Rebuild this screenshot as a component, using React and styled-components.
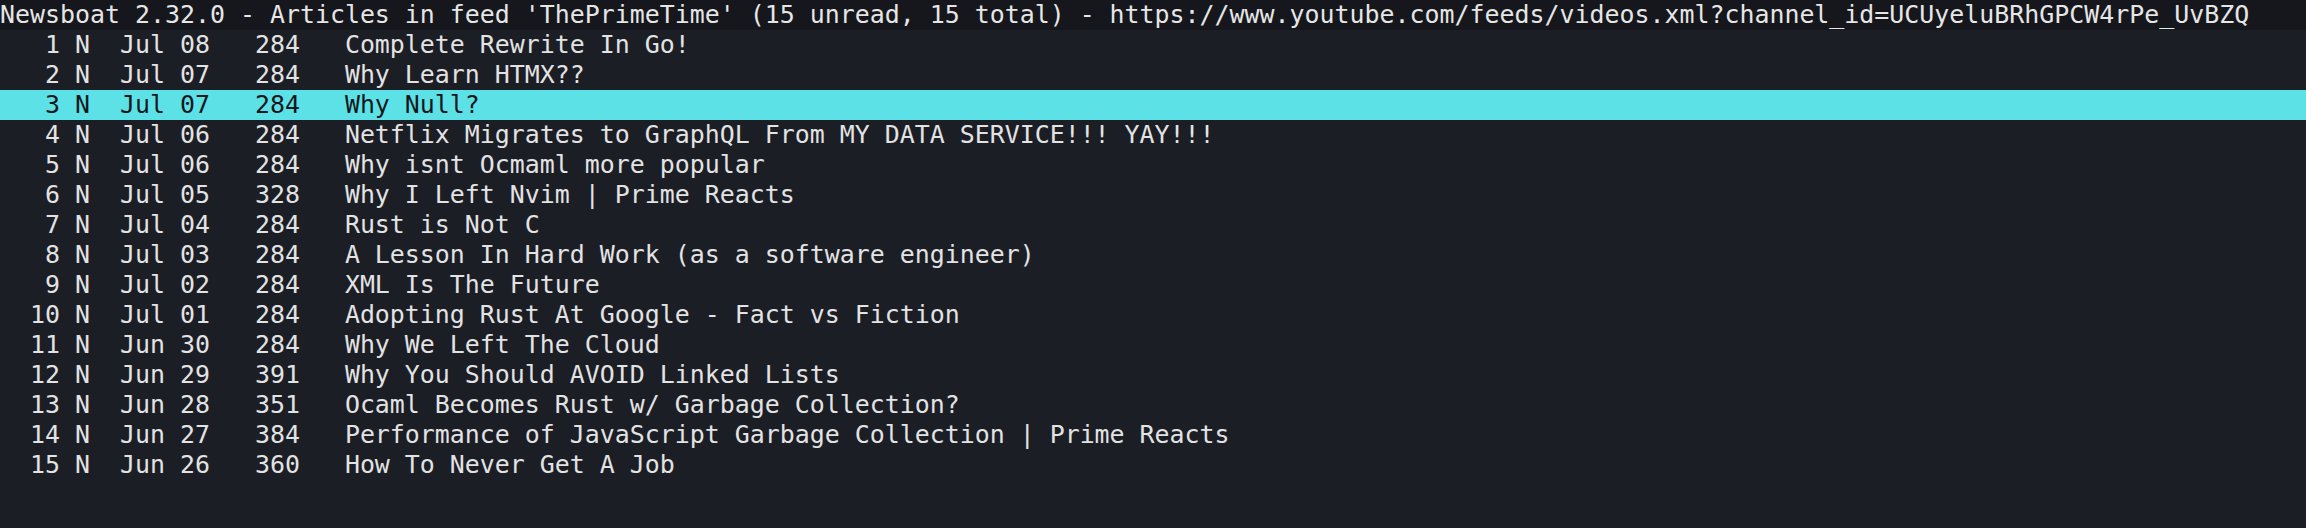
import styled, { createGlobalStyle } from 'styled-components';

const GlobalStyle = createGlobalStyle`
    html, body {
        margin: 0;
        padding: 0;
        background-color: #1c1e26;
    }
`;

const Screen = styled.div`
    display: flex;
    flex-direction: column;
    min-height: 100vh;
    background-color: #1c1e26;
    color: #e3e3e3;
    font-family: 'DejaVu Sans Mono', 'Liberation Mono', monospace;
    font-size: 24.92px;
    line-height: 30px;
    overflow: hidden;
`;

const TitleBar = styled.div`
    height: 30px;
    background-color: #15171c;
    color: #e6e6e6;
    white-space: pre;
`;

const ArticleList = styled.div`
    display: flex;
    flex-direction: column;
`;

const Row = styled.div`
    height: 30px;
    white-space: pre;
    background-color: ${props => (props.$selected ? '#5ce1e6' : 'transparent')};
    color: ${props => (props.$selected ? '#15171c' : '#e3e3e3')};
`;

const articles = [
    { id: 1, date: 'Jul 08', size: 284, title: 'Complete Rewrite In Go!' },
    { id: 2, date: 'Jul 07', size: 284, title: 'Why Learn HTMX??' },
    { id: 3, date: 'Jul 07', size: 284, title: 'Why Null?' },
    { id: 4, date: 'Jul 06', size: 284, title: 'Netflix Migrates to GraphQL From MY DATA SERVICE!!! YAY!!!' },
    { id: 5, date: 'Jul 06', size: 284, title: 'Why isnt Ocmaml more popular' },
    { id: 6, date: 'Jul 05', size: 328, title: 'Why I Left Nvim | Prime Reacts' },
    { id: 7, date: 'Jul 04', size: 284, title: 'Rust is Not C' },
    { id: 8, date: 'Jul 03', size: 284, title: 'A Lesson In Hard Work (as a software engineer)' },
    { id: 9, date: 'Jul 02', size: 284, title: 'XML Is The Future' },
    { id: 10, date: 'Jul 01', size: 284, title: 'Adopting Rust At Google - Fact vs Fiction' },
    { id: 11, date: 'Jun 30', size: 284, title: 'Why We Left The Cloud' },
    { id: 12, date: 'Jun 29', size: 391, title: 'Why You Should AVOID Linked Lists' },
    { id: 13, date: 'Jun 28', size: 351, title: 'Ocaml Becomes Rust w/ Garbage Collection?' },
    { id: 14, date: 'Jun 27', size: 384, title: 'Performance of JavaScript Garbage Collection | Prime Reacts' },
    { id: 15, date: 'Jun 26', size: 360, title: 'How To Never Get A Job' }
];

const title =
    "Newsboat 2.32.0 - Articles in feed 'ThePrimeTime' (15 unread, 15 total) - https://www.youtube.com/feeds/videos.xml?channel_id=UCUyeluBRhGPCW4rPe_UvBZQ";

// newsboat style line: "%4i %f %D %5L   %t"
const formatLine = a => `${String(a.id).padStart(4)} N  ${a.date} ${String(a.size).padStart(5)}   ${a.title}`;

const App = () => {
    const selectedId = 3;

    return (
        <>
            <GlobalStyle />
            <Screen>
                <TitleBar>{title}</TitleBar>
                <ArticleList>
                    {articles.map(a => (
                        <Row key={a.id} $selected={a.id === selectedId}>
                            {formatLine(a)}
                        </Row>
                    ))}
                </ArticleList>
            </Screen>
        </>
    );
};

export default App;
